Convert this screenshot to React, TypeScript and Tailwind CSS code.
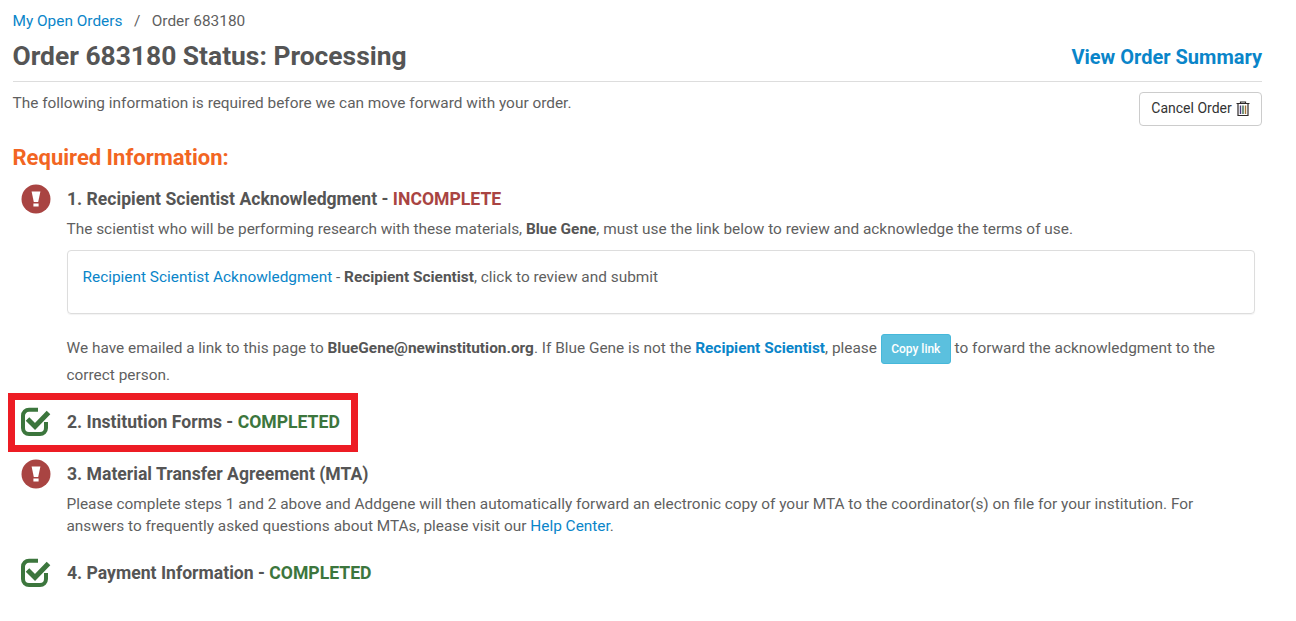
import type { JSX, ReactNode } from 'react';

const LINK = 'text-[#0a85c9]';

function AlertIcon(): JSX.Element {
  return (
    <svg width="30" height="30" viewBox="0 0 30 30" aria-hidden="true">
      <circle cx="15" cy="15" r="14.5" fill="#a94442" />
      <path d="M10.6 7.5h8.8l-2.2 10.5h-4.4z" fill="#fff" />
      <rect x="12.4" y="19.5" width="5.2" height="3" fill="#fff" />
    </svg>
  );
}

function CheckIcon(): JSX.Element {
  return (
    <svg width="30" height="30" viewBox="0 0 30 30" fill="none" stroke="#3c763d" aria-hidden="true">
      <path strokeWidth="4" d="M17 2.75H8a6 6 0 0 0-6 6v12.25a6 6 0 0 0 6 6h11a6 6 0 0 0 6-6V15" />
      <path strokeWidth="5" d="M6.5 12l7.5 7.5L27.5 5.5" />
    </svg>
  );
}

function TrashIcon(): JSX.Element {
  return (
    <svg width="14" height="15" viewBox="0 0 14 15" fill="none" stroke="#2f2a2a" strokeWidth="1.2" aria-hidden="true">
      <path d="M4.5 2.5v-1.5h5v1.5M0.5 2.5h13M2 3v11.5h10V3" />
      <path d="M4.5 4.5v8.5" stroke="#4a3a7a" strokeWidth="1.4" />
      <path d="M7 4.5v8.5" stroke="#3a6a4a" strokeWidth="1.4" />
      <path d="M9.5 4.5v8.5" stroke="#a8753a" strokeWidth="1.4" />
    </svg>
  );
}

function StepHeading({ icon, children }: { icon: ReactNode; children: ReactNode }): JSX.Element {
  return (
    <div className="flex items-center">
      <div className="flex w-[54.5px] shrink-0 pl-[8px]">{icon}</div>
      <h3 className="text-[17.6px] leading-[20px] font-bold text-[#555]">{children}</h3>
    </div>
  );
}

export default function App(): JSX.Element {
  return (
    <div className="min-h-[621px] bg-white pl-[12.5px] pr-[34px] pt-[12px] font-['Roboto',sans-serif] text-[15.4px] leading-[22px] text-[#5f5f5f]">
      <nav className="flex h-[18px] items-center">
        <a className={LINK}>My Open Orders</a>
        <span className="px-[11.5px]">/</span>
        <span>Order 683180</span>
      </nav>

      <div className="mt-[8px] flex h-[37px] items-center justify-between">
        <h1 className="text-[26.4px] leading-[37px] font-bold text-[#555]">Order 683180 Status: Processing</h1>
        <a className={`text-[20px] font-bold ${LINK}`}>View Order Summary</a>
      </div>
      <hr className="mt-[6px] border-[#ddd]" />

      <div className="mt-[10px] flex items-start justify-between">
        <p>The following information is required before we can move forward with your order.</p>
        <button type="button" className="flex h-[34px] w-[123px] items-center justify-center gap-[4px] rounded-[4px] border border-[#ccc] bg-white pb-[2px] text-[14px] text-[#333]">
          Cancel Order <TrashIcon />
        </button>
      </div>

      <h2 className="mt-[18px] text-[22px] leading-[28px] font-bold text-[#f26522]">Required Information:</h2>

      <div className="mt-[12px]">
        <StepHeading icon={<AlertIcon />}>
          1. Recipient Scientist Acknowledgment - <span className="text-[#a94442]">INCOMPLETE</span>
        </StepHeading>
        <div className="ml-[54px]">
          <p className="mt-[4px]">
            The scientist who will be performing research with these materials, <b className="font-bold text-[#555]">Blue Gene</b>, must use the link below to review and acknowledge the terms of use.
          </p>
          <div className="mt-[10px] h-[64px] w-[1188px] rounded-[4px] border border-[#ddd] px-[15px] pt-[15px] shadow-[0_1px_1px_rgba(0,0,0,0.05)]">
            <a className={LINK}>Recipient Scientist Acknowledgment</a> - <b className="font-bold text-[#555]">Recipient Scientist</b>, click to review and submit
          </div>
          <div className="mt-[20px] w-[1188px] leading-[23px]">
            We have emailed a link to this page to <b className="font-bold text-[#555]">BlueGene@newinstitution.org</b>. If Blue Gene is not the <a className={`font-bold ${LINK}`}>Recipient Scientist</a>, please{' '}
            <button type="button" className="h-[30px] w-[70px] rounded-[3px] border border-[#46b8da] bg-[#5bc0de] text-[12px] font-medium text-white">Copy link</button>{' '}
            to forward the acknowledgment to the correct person.
          </div>
        </div>
      </div>

      <div className="relative mt-[20px]">
        <StepHeading icon={<CheckIcon />}>
          2. Institution Forms - <span className="text-[#3c763d]">COMPLETED</span>
        </StepHeading>
        <div className="absolute left-[-4.5px] top-[-14px] h-[59px] w-[350px] border-[7px] border-[#ed1c24]" />
      </div>

      <div className="mt-[22px]">
        <StepHeading icon={<AlertIcon />}>3. Material Transfer Agreement (MTA)</StepHeading>
        <p className="mt-[4px] ml-[54px] w-[1188px]">
          Please complete steps 1 and 2 above and Addgene will then automatically forward an electronic copy of your MTA to the coordinator(s) on file for your institution. For answers to frequently asked questions about MTAs, please visit our <a className={LINK}>Help Center</a>.
        </p>
      </div>

      <div className="mt-[21px]">
        <StepHeading icon={<CheckIcon />}>
          4. Payment Information - <span className="text-[#3c763d]">COMPLETED</span>
        </StepHeading>
      </div>
    </div>
  );
}
